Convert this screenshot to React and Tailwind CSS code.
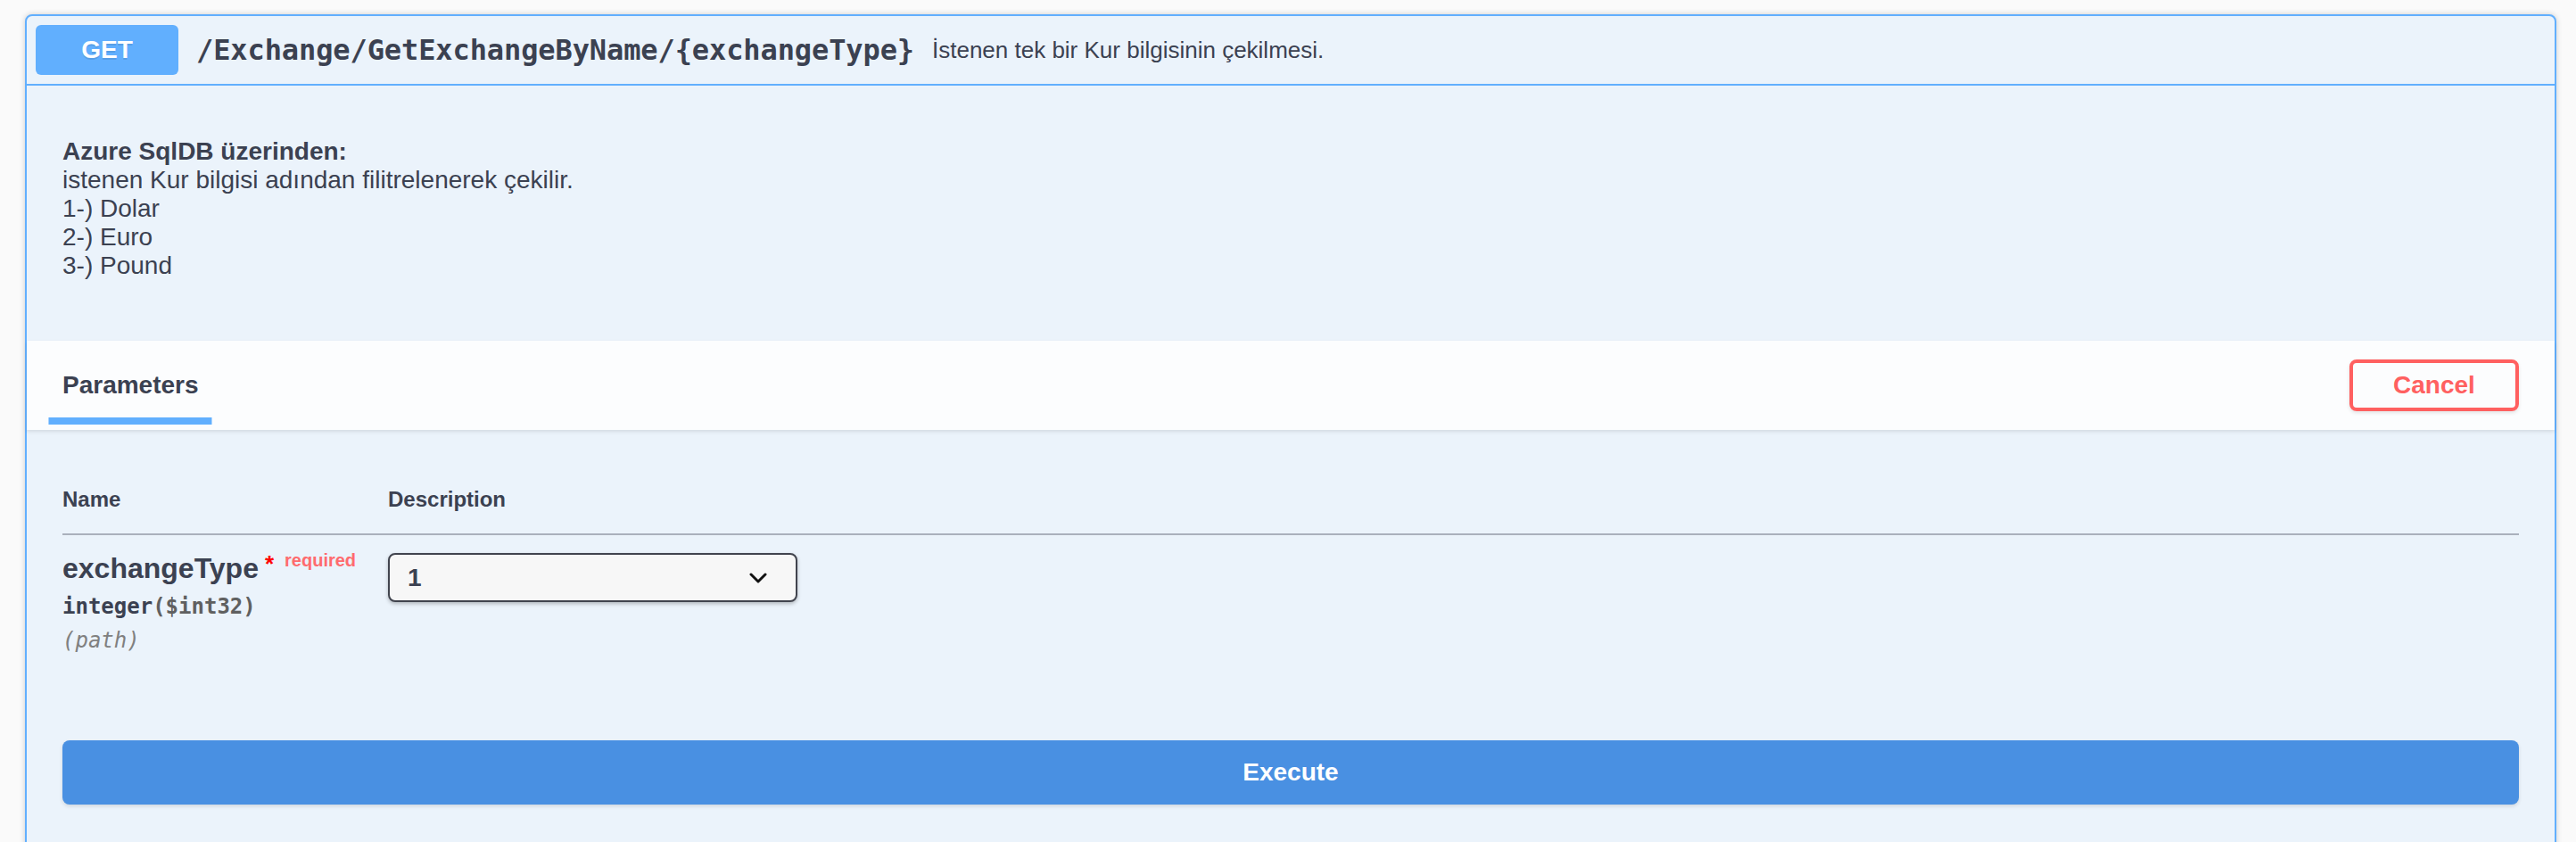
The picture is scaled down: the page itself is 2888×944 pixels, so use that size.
import React from "react";

const sans = "font-['Liberation_Sans','Helvetica','Arial',sans-serif]";
const mono = "font-['DejaVu_Sans_Mono','Liberation_Mono',monospace]";

function Chevron() {
  return (
    <svg width="20" height="12" viewBox="0 0 20 12" className="absolute right-[32px] top-1/2 -translate-y-1/2">
      <path d="M2 2 L10 10 L18 2" fill="none" stroke="#111" strokeWidth="3" strokeLinecap="round" strokeLinejoin="round" />
    </svg>
  );
}

export default function App() {
  const lines = [
    "istenen Kur bilgisi adından filitrelenerek çekilir.",
    "1-) Dolar",
    "2-) Euro",
    "3-) Pound",
  ];

  return (
    <div className={`min-h-screen bg-[#fafafa] pl-[28px] pr-[22px] pt-[16px] ${sans} text-[#3b4151]`}>
      <div className="border-2 border-[#61affe] rounded-[8px] bg-[#ebf3fb] shadow-[0_0_6px_rgba(0,0,0,0.19)] pb-[120px]">

        {/* Summary */}
        <div className="flex items-center p-[10px] border-b-2 border-[#61affe]">
          <div className="w-[160px] h-[56px] rounded-[6px] bg-[#61affe] flex items-center justify-center text-white font-bold text-[28px] [text-shadow:0_2px_0_rgba(0,0,0,0.1)]">
            GET
          </div>
          <span className={`px-[20px] ${mono} font-bold text-[32px] text-[#3b4151] tracking-[-0.1px]`}>
            /Exchange/GetExchangeByName/&#123;exchangeType&#125;
          </span>
          <span className="text-[26px] text-[#3b4151]">İstenen tek bir Kur bilgisinin çekilmesi.</span>
        </div>

        {/* Description */}
        <div className="px-[40px] pt-[58px] pb-[68px] text-[28px] leading-[32px] text-[#3b4151]">
          <p className="font-bold">Azure SqlDB üzerinden:</p>
          {lines.map((l) => (
            <p key={l}>{l}</p>
          ))}
        </div>

        {/* Section header */}
        <div className="h-[100px] px-[40px] flex items-center justify-between bg-[#fcfdfe] shadow-[0_2px_4px_rgba(0,0,0,0.1)]">
          <h4 className="text-[28px] leading-[32px] font-bold text-[#3b4151]">
            <span className="relative">
              Parameters
              <span className="absolute left-1/2 -translate-x-1/2 bottom-[-29px] w-[120%] h-[8px] bg-[#61affe]"></span>
            </span>
          </h4>
          <button className="w-[190px] h-[58px] border-4 border-[#ff6060] rounded-[8px] text-[#ff6060] font-bold text-[28px] shadow-[0_2px_4px_rgba(0,0,0,0.1)]">
            Cancel
          </button>
        </div>

        {/* Parameters table */}
        <div className="px-[40px] pt-[40px]">
          <div className="flex border-b-2 border-[#aab0bc] py-[24px] text-[24px] leading-[28px] font-bold text-[#3b4151]">
            <div className="w-[365px]">Name</div>
            <div>Description</div>
          </div>
          <div className="flex pt-[19px]">
            <div className="w-[365px]">
              <div className="flex items-start">
                <span className="text-[32px] leading-[37px] font-bold text-[#3b4151]">exchangeType</span>
                <span className="relative top-[-2px] ml-[7px] text-[26px] leading-[30px] font-bold text-[#ff0000]">*</span>
                <span className="relative top-[-2px] ml-[12px] text-[20px] leading-[23px] font-bold text-[#ff6b6e]">required</span>
              </div>
              <div className={`${mono} text-[24px] leading-[28px] font-bold py-[10px]`}>
                integer<span className="text-[#606060]">($int32)</span>
              </div>
              <div className={`${mono} text-[24px] leading-[28px] italic text-[#808080]`}>(path)</div>
            </div>
            <div className="pt-[1px]">
              <div className="relative w-[459px] h-[55px] border-2 border-[#41444e] rounded-[8px] bg-[#f7f7f7] shadow-[0_2px_4px_rgba(0,0,0,0.25)] flex items-center pl-[20px] text-[28px] font-bold text-[#3b4151]">
                1
                <Chevron />
              </div>
            </div>
          </div>
        </div>

        {/* Execute */}
        <div className="px-[40px] pt-[98px]">
          <button className="w-full h-[72px] rounded-[8px] bg-[#4990e2] text-white font-bold text-[28px] shadow-[0_2px_4px_rgba(0,0,0,0.12)]">
            Execute
          </button>
        </div>
      </div>
    </div>
  );
}
